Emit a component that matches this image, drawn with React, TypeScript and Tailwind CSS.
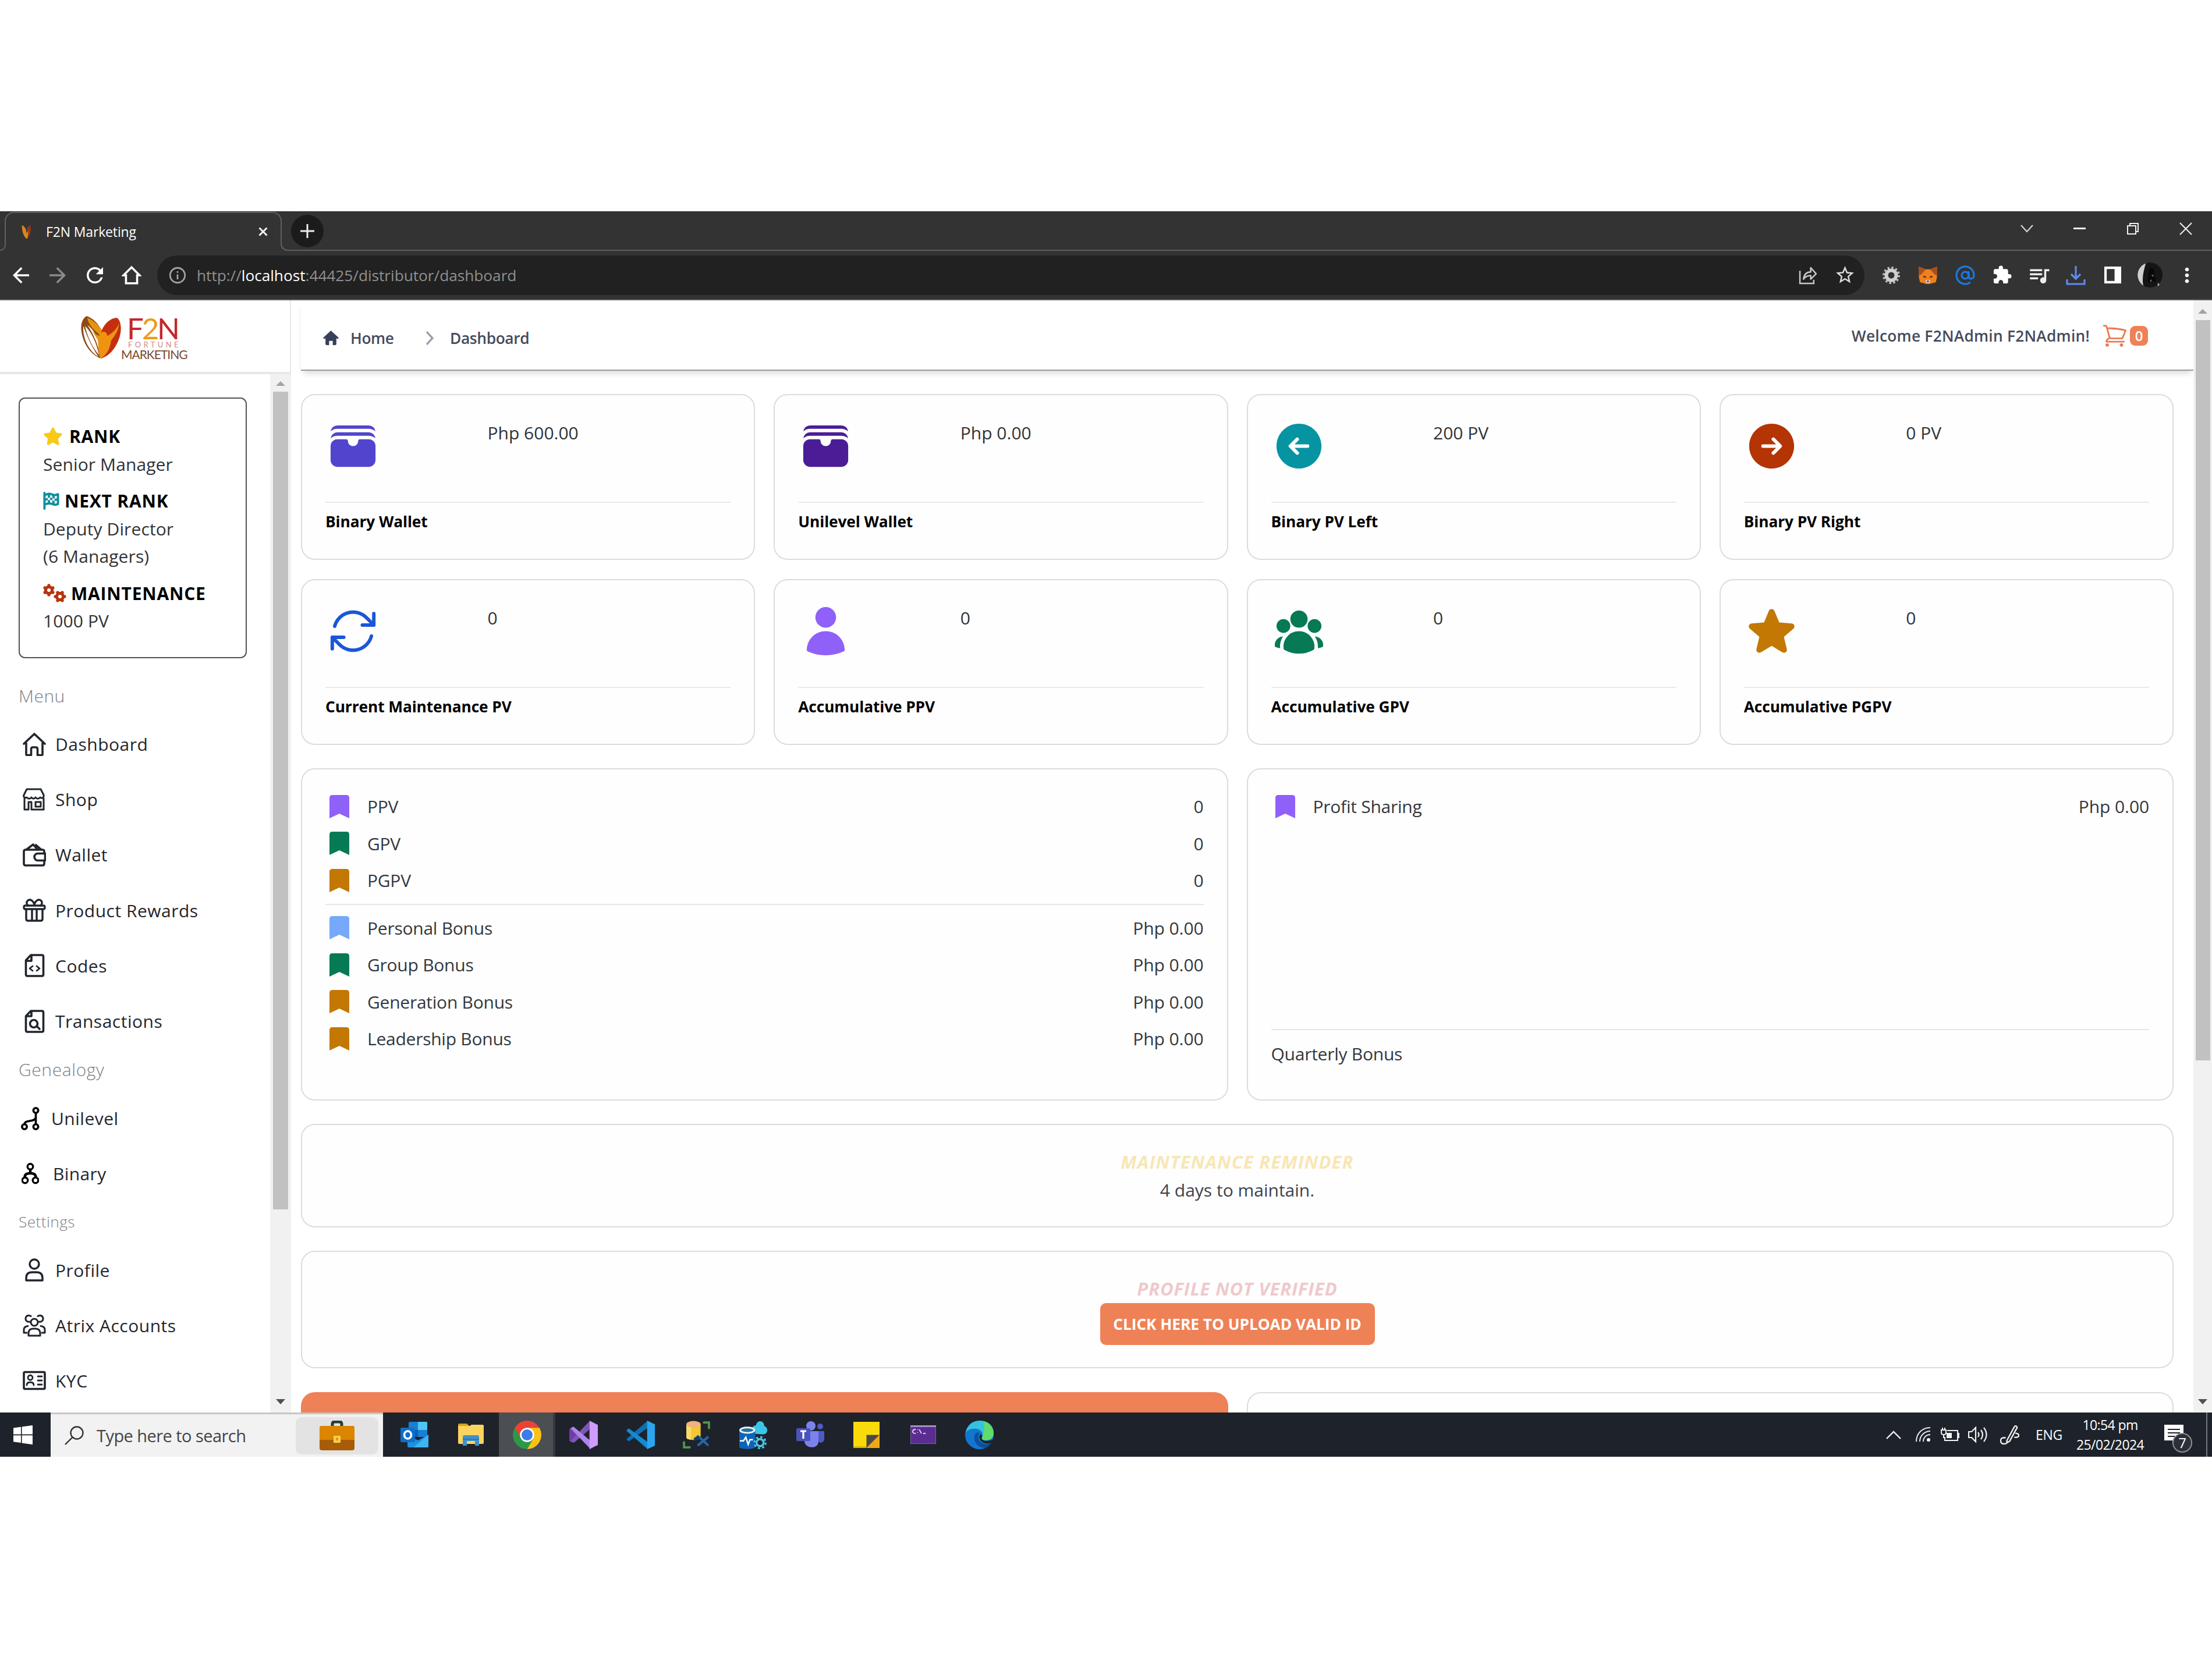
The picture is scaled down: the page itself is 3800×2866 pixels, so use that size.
import React from 'react';
import {
  HiWallet,
  HiArrowLeftCircle,
  HiArrowRightCircle,
  HiOutlineArrowPath,
  HiUser,
  HiUserGroup,
  HiStar,
  HiOutlineShoppingCart,
} from 'react-icons/hi2';
import { FaStar, FaFlagCheckered, FaGears } from 'react-icons/fa6';
import {
  MdArrowBack,
  MdArrowForward,
  MdRefresh,
  MdInfoOutline,
  MdStarBorder,
  MdExtension,
  MdQueueMusic,
  MdMoreVert,
} from 'react-icons/md';

/* ---------- browser chrome ---------- */

function TabStrip() {
  return (
    <div className="flex h-[68px] bg-[#333333] pt-px">
      <div className="h-[14px] w-[10px] self-end rounded-br-[12px] border-r-2 border-b-2 border-[#606060]" />
      <div className="-ml-[2px] flex h-[54px] w-[476px] items-center rounded-t-[16px] border-x-2 border-t-2 border-[#606060] pt-[11px] pl-[27px]">
        <svg viewBox="0 0 17 26" className="h-[26px] w-[17px]">
          <path d="M1 2C4 3 8 8 8 12v13C3 20 0 10 1 2z" fill="#d9861c" />
          <path d="M15 2c-3 1-6 5-6 9v14c6-4 8-15 6-23z" fill="#9e3416" />
          <path d="M6 12l3 3 3-3-2 13H8z" fill="#d9861c" />
        </svg>
        <span className="ml-[25px] text-[23px] leading-[28px] tracking-[-0.15px] text-white">F2N Marketing</span>
        <svg viewBox="0 0 16 16" className="ml-auto mr-[22px] h-[16px] w-[16px]" stroke="#f1f1f1" strokeWidth="3">
          <path d="M1.5 1.5l13 13M14.5 1.5l-13 13" />
        </svg>
      </div>
      <div className="-ml-[2px] h-[14px] w-[14px] self-end rounded-bl-[12px] border-b-2 border-l-2 border-[#606060]" />
      <div className="flex flex-1 items-start border-b-2 border-[#606060]">
        <div className="mt-[5px] ml-[4px] flex h-[56px] w-[56px] items-center justify-center rounded-full bg-[#1b1b1b]">
          <svg viewBox="0 0 24 24" className="h-[24px] w-[24px]" stroke="#ececec" strokeWidth="3">
            <path d="M12 0v24M0 12h24" />
          </svg>
        </div>
        <div className="ml-auto flex h-[57px] items-center">
          <div className="flex w-[91px] justify-center">
            <svg viewBox="0 0 22 14" className="h-[14px] w-[22px]" fill="none" stroke="#dedede" strokeWidth="2">
              <path d="M1 1l10 11L21 1" />
            </svg>
          </div>
          <div className="flex w-[91px] justify-center">
            <div className="h-[2.5px] w-[21px] bg-[#f1f1f1]" />
          </div>
          <div className="flex w-[91px] justify-center">
            <svg viewBox="0 0 22 22" className="h-[22px] w-[22px]" fill="none" stroke="#f1f1f1" strokeWidth="2">
              <path d="M2 6h14v14H2zM6 6V2h14v14h-4" />
            </svg>
          </div>
          <div className="flex w-[91px] justify-center">
            <svg viewBox="0 0 22 22" className="h-[22px] w-[22px]" stroke="#f1f1f1" strokeWidth="2">
              <path d="M1 1l20 20M21 1L1 21" />
            </svg>
          </div>
        </div>
      </div>
    </div>
  );
}

function Cell({ children }: { children: React.ReactNode }) {
  return <div className="flex w-[63.5px] shrink-0 items-center justify-center">{children}</div>;
}

function Toolbar() {
  return (
    <div className="flex h-[85px] items-center border-b-2 border-[#5b5b5b] bg-[#333333] pl-[4px]">
      <Cell><MdArrowBack className="size-[42px] text-white" /></Cell>
      <Cell><MdArrowForward className="size-[42px] text-[#8b8b8b]" /></Cell>
      <Cell><MdRefresh className="size-[42px] text-white" /></Cell>
      <Cell>
        <svg viewBox="0 0 32 32" className="size-[34px]" fill="none" stroke="#fff" strokeWidth="3.4">
          <path d="M3 16L16 3l13 13h-4v13H7V16z" />
        </svg>
      </Cell>
      <div className="ml-[12px] flex h-[68px] w-[2933px] items-center rounded-full bg-[#212121] pr-[2px] pl-[18px]">
        <MdInfoOutline className="size-[34px] text-[#a0a0a0]" />
        <span className="ml-[16px] text-[26.3px] leading-[40px] tracking-[-0.05px] text-[#8f8f8f]">
          http://<span className="text-white">localhost</span>:44425/distributor/dashboard
        </span>
        <div className="ml-auto flex">
          <Cell>
            <svg viewBox="0 0 31 31" className="size-[32px]" fill="none" stroke="#c8c8c8" strokeWidth="2.4">
              <path d="M2 8v21h23v-6" />
              <path d="M8 22c1-8 5-12 12-12V3l9 10-9 9v-6c-5 0-9 1-12 6z" strokeLinejoin="round" />
            </svg>
          </Cell>
          <Cell><MdStarBorder className="size-[37px] text-[#dcdcdc]" /></Cell>
        </div>
      </div>
      <div className="ml-[14px] flex">
        <Cell>
          <svg viewBox="0 0 32 32" className="size-[32px]" fill="none">
            <circle cx="16" cy="16" r="13" stroke="#bdbdbd" strokeWidth="4" strokeDasharray="3.4 3.4" />
            <circle cx="16" cy="16" r="8.5" stroke="#cfcfcf" strokeWidth="6" />
          </svg>
        </Cell>
        <Cell>
          <svg viewBox="0 0 34 32" className="h-[31px] w-[34px]">
            <path d="M1 1l12 5h8l12-5v19l-2 9-8 2-3 1h-6l-3-1-8-2-2-9z" fill="#f07f1e" />
            <path d="M1 1l12 5-8 9-4 2zM33 1L21 6l8 9 4 2z" fill="#a5501d" />
            <path d="M9 17l5 2 0 2-5-1zM25 17l-5 2 0 2 5-1z" fill="#4a3222" />
            <path d="M13 25h8l-1 5h-6z" fill="#e6ddd4" />
            <path d="M15 26h4l-1 3h-2z" fill="#3a3a3a" />
          </svg>
        </Cell>
        <Cell>
          <svg viewBox="0 0 34 34" className="size-[34px]" fill="none" stroke="#1b79e6" strokeWidth="3.2">
            <circle cx="17" cy="17" r="6" />
            <path d="M23 10v9c0 3 2 4 4 4 3 0 5-3 5-6A15 15 0 1 0 26 29" />
          </svg>
        </Cell>
        <Cell><MdExtension className="size-[35px] text-white" /></Cell>
        <Cell><MdQueueMusic className="size-[42px] text-[#ededed]" /></Cell>
        <Cell>
          <svg viewBox="0 0 34 34" className="size-[34px]" fill="none" stroke="#5b8def" strokeWidth="3.2">
            <path d="M17 1v22M9 15l8 8 8-8M2 24v8h30v-8" />
          </svg>
        </Cell>
        <Cell>
          <svg viewBox="0 0 28 28" className="size-[29px]">
            <path d="M0 0h28v28H0zM4 4v20h13V4z" fill="#fff" fillRule="evenodd" />
          </svg>
        </Cell>
        <Cell>
          <svg viewBox="0 0 42 42" className="size-[43px]">
            <circle cx="21" cy="21" r="21" fill="#151515" />
            <path d="M14 1.500A21 21 0 0 0 10 39C7 28 10 14 14 1.500z" fill="#cfcfcf" />
            <path d="M20 10c5-3 9 2 8 8l3 14h-14z" fill="#080808" />
            <path d="M24 21l3 2M22 29l1 3" stroke="#777" strokeWidth="2" />
            <path d="M34 34l3 3-3 3z" fill="#bbb" />
          </svg>
        </Cell>
        <Cell><MdMoreVert className="size-[40px] text-white" /></Cell>
      </div>
    </div>
  );
}

/* ---------- scrollbars ---------- */

function ArrowUp() {
  return (
    <svg viewBox="0 0 16 8" className="h-[8px] w-[16px] shrink-0">
      <path d="M0 8l8-8 8 8z" fill="#a3a3a3" />
    </svg>
  );
}

function ArrowDown() {
  return (
    <svg viewBox="0 0 16 9" className="mt-auto mb-[14px] h-[9px] w-[16px] shrink-0">
      <path d="M0 0l8 9 8-9z" fill="#505050" />
    </svg>
  );
}

/* ---------- sidebar ---------- */

function Logo() {
  return (
    <div className="flex h-[127px] items-start border-r-2 border-b-4 border-[#e7e7e7] pt-[26px] pl-[138px]">
      <svg viewBox="0 0 70 75" className="h-[75px] w-[70px] shrink-0">
        <path d="M11 1C3 5 0 16 2 28c3 20 14 38 33 46 4-14 6-32 3-46C31 14 22 5 11 1z" fill="#8a4b14" />
        <path d="M5 18C4 40 14 60 31 71 20 54 12 38 5 18z" fill="#fff" />
        <path d="M8 18c4 18 12 36 24 50C28 48 20 30 8 18z" fill="#fff" />
        <path d="M12 16c8 12 16 28 20 44l1-10C30 36 22 24 12 16z" fill="#fff" />
        <path d="M12 4c2 12 10 20 20 28l4 10 2-14C32 16 22 8 12 4z" fill="#e8930f" />
        <path d="M37 25C42 13 53 4 63 4c8 6 9 24 2 40-6 14-15 25-29 30-4-16-4-34 1-49z" fill="#c4300f" />
        <path d="M34 74c-3-12-3-24-4-32L20 26c6 6 10 9 14 9 0-4 2-7 6-7s6 3 6 7C54 32 62 24 67 13c-2 14-8 22-14 30-2 14-8 26-19 31z" fill="#ef9410" />
      </svg>
      <div className="flex w-[116px] flex-col pt-[3px]">
        <div className="flex h-[38px] items-center pl-[10px] font-['Lato'] text-[51px] leading-[38px] tracking-[-3.2px] text-[#c4282d]">
          F<span className="text-[#f09a1a]">2</span>N
        </div>
        <div className="mt-[4px] h-[10px] pl-[12px] font-['Lato'] text-[13px] leading-[10px] tracking-[4.4px] text-[#d08a86]">
          FORTUNE
        </div>
        <div className="mt-[4px] h-[16px] font-['Lato'] text-[21px] leading-[16px] tracking-[-1px] text-[#7c4a30]">
          MARKETING
        </div>
      </div>
    </div>
  );
}

function RankBox() {
  const heading = "text-[30px] leading-[47.5px] font-bold text-black tracking-[0.8px]";
  const line = "text-[30px] leading-[47.5px] tracking-[0.1px] text-[#2f3336]";
  return (
    <div className="mt-[40px] h-[448px] w-[392px] rounded-[11px] border-2 border-[#50525a] pt-[41px] pl-[40px]">
      <div className="flex items-center">
        <FaStar className="h-[31px] w-[34px] text-[#f8ca17]" />
        <span className={heading + " ml-[11px]"}>RANK</span>
      </div>
      <div className={line}>Senior Manager</div>
      <div className="mt-[16px] flex items-center">
        <FaFlagCheckered className="h-[31px] w-[28px] text-[#0e8f9c]" />
        <span className={heading + " ml-[9px]"}>NEXT RANK</span>
      </div>
      <div className={line}>Deputy Director</div>
      <div className={line}>(6 Managers)</div>
      <div className="mt-[16px] flex items-center">
        <FaGears className="h-[32px] w-[40px] text-[#b5350f]" />
        <span className={heading + " ml-[8px]"}>MAINTENANCE</span>
      </div>
      <div className={line}>1000 PV</div>
    </div>
  );
}

function Glyph({ name }: { name: string }) {
  const common = {
    viewBox: '0 0 40 40',
    className: 'size-[40px]',
    fill: 'none',
    stroke: '#20242c',
    strokeWidth: 3.6,
    strokeLinecap: 'round' as const,
    strokeLinejoin: 'round' as const,
  };
  switch (name) {
    case 'home':
      return (
        <svg {...common}>
          <path d="M2 19L20 2l18 17M6 17v20q0 1.500 1.500 1.500h7V28q0-3 3-3h5q3 0 3 3v10.500h7q1.500 0 1.500-1.500V17" />
        </svg>
      );
    case 'shop':
      return (
        <svg {...common} strokeWidth={3}>
          <path d="M7 2h24l5 10c1 4-3 7-6 4-2 3-6 3-8 0-2 3-5 3-7 0-2 3-6 3-8 0-4 2-6-1-5-4zM3 18v19h7V24h5v13h21V18" />
          <path d="M22 24h9v8h-9z" />
        </svg>
      );
    case 'wallet':
      return (
        <svg {...common}>
          <path d="M37 17v-3q0-3-3-3H5q-3 0-3 3v21q0 3 3 3h29q3 0 3-3v-3M6 11l12-9 8 9M23 3l9 8" />
          <path d="M38.500 17.500H26a4 4 0 0 0 0 12h12.500z" />
        </svg>
      );
    case 'gift':
      return (
        <svg {...common} strokeWidth={3.4}>
          <path d="M4 12h32q2 0 2 3t-2 3H4q-2 0-2-3t2-3zM6 18v17q0 3 3 3h22q3 0 3-3V18M16 18v20M24 18v20" />
          <path d="M20 10C18 3 13 1 10 2.500 6 4.500 6 9 9 12M20 10c2-7 7-9 10-7.500C34 4.500 34 9 31 12" />
        </svg>
      );
    case 'code':
      return (
        <svg {...common}>
          <path d="M14 2h19q2.500 0 2.500 2.500v31q0 2.500-2.500 2.500H8q-2.500 0-2.500-2.500V11zM15 3v9H6" />
          <path d="M17 21l-5 4 5 4M24 21l5 4-5 4" strokeWidth="2.8" />
        </svg>
      );
    case 'search':
      return (
        <svg {...common}>
          <path d="M14 2h19q2.500 0 2.500 2.500v31q0 2.500-2.500 2.500H8q-2.500 0-2.500-2.500V11zM15 3v8H6" />
          <circle cx="19" cy="24" r="6.500" />
          <path d="M24 28l5 5" />
        </svg>
      );
    case 'profile':
      return (
        <svg {...common} strokeWidth={3.4}>
          <circle cx="20" cy="10" r="8" />
          <path d="M6 38v-4q0-10 10-10h8q10 0 10 10v4z" />
        </svg>
      );
    case 'users':
      return (
        <svg {...common} strokeWidth={3}>
          <circle cx="20" cy="15" r="6" />
          <path d="M10 38v-4q0-8 8-8h4q8 0 8 8v4z" />
          <path d="M12 14a5.500 5.500 0 1 1 2-9.500M28 14a5.500 5.500 0 1 0-2-9.500M7 33H2v-5q0-6 7-6.500M33 33h5v-5q0-6-7-6.500" />
        </svg>
      );
    default:
      return (
        <svg {...common}>
          <path d="M4 5.500h32q2 0 2 2v25q0 2-2 2H4q-2 0-2-2v-25q0-2 2-2z" />
          <g strokeWidth="2.8">
            <circle cx="13" cy="15" r="4" />
            <path d="M7 28q0-5 6-5t6 5M26 13h7M26 20h7M26 27h7" />
          </g>
        </svg>
      );
  }
}

function NavItem({ icon, label }: { icon: string; label: string }) {
  return (
    <div className="flex h-[95.1px] items-center pl-[39px]">
      <Glyph name={icon} />
      <span className="ml-[16px] text-[30px] leading-[47.5px] tracking-[0.5px] text-[#23262b]">{label}</span>
    </div>
  );
}

function Sidebar() {
  return (
    <aside className="flex w-[500px] shrink-0 flex-col bg-white">
      <Logo />
      <div className="flex min-h-0 flex-1">
        <nav className="flex w-[464px] flex-col">
          <div className="ml-[32px]">
            <RankBox />
          </div>
          <div className="mt-[41px] mb-[12px] h-[47.5px] pl-[32px] text-[30px] leading-[47.5px] font-light tracking-[0.5px] text-[#7d8084]">Menu</div>
          <NavItem icon="home" label="Dashboard" />
          <NavItem icon="shop" label="Shop" />
          <NavItem icon="wallet" label="Wallet" />
          <NavItem icon="gift" label="Product Rewards" />
          <NavItem icon="code" label="Codes" />
          <NavItem icon="search" label="Transactions" />
          <div className="mt-[12px] mb-[12.5px] h-[47.5px] pl-[32px] text-[30px] leading-[47.5px] font-light tracking-[0.6px] text-[#7d8084]">Genealogy</div>
          <div className="flex h-[95.1px] items-center pl-[36px]">
            <svg viewBox="0 0 32 40" className="h-[40px] w-[32px]" fill="none" stroke="#000" strokeWidth="3.6">
              <circle cx="25.500" cy="6" r="4.200" />
              <circle cx="6" cy="34" r="4.200" />
              <circle cx="25.500" cy="34" r="4.200" />
              <path d="M25.500 10v20M6 30c0-9 18-3 19.500-12" />
            </svg>
            <span className="ml-[20px] text-[30px] leading-[47.5px] tracking-[0.5px] text-[#23262b]">Unilevel</span>
          </div>
          <div className="flex h-[95.1px] items-center pl-[37px]">
            <svg viewBox="0 0 30 37" className="h-[37px] w-[30px]" fill="none" stroke="#000" strokeWidth="3.4">
              <circle cx="15" cy="6.500" r="4.800" />
              <circle cx="6" cy="30" r="4.800" />
              <circle cx="24" cy="30" r="4.800" />
              <path d="M15 11v7M5.500 25c0-6 4-7 9.500-7s9.500 1 9.500 7" strokeWidth="4.5" />
            </svg>
            <span className="ml-[24px] text-[30px] leading-[47.5px] tracking-[0.4px] text-[#23262b]">Binary</span>
          </div>
          <div className="mt-[14.5px] mb-[16px] h-[40px] pl-[32px] text-[26.3px] leading-[40px] font-light tracking-[0.4px] text-[#7d8084]">Settings</div>
          <NavItem icon="profile" label="Profile" />
          <NavItem icon="users" label="Atrix Accounts" />
          <NavItem icon="card" label="KYC" />
        </nav>
        <div className="flex w-[36px] flex-col items-center bg-[#f1f1f1] pt-[12px]">
          <ArrowUp />
          <div className="mt-[10px] h-[1405px] w-[26px] bg-[#c1c1c1]" />
          <ArrowDown />
        </div>
      </div>
    </aside>
  );
}

/* ---------- dashboard ---------- */

function TopBar() {
  return (
    <header className="ml-[17px] flex h-[121px] shrink-0 border-b-2 border-[#9b9b9b] bg-white pl-[38px] shadow-[0_8px_10px_-4px_rgba(0,0,0,0.16)]">
      <div className="flex h-[129px] items-center text-[26.3px] leading-[40px] font-semibold tracking-[-0.35px] text-[#454b5c]">
        <svg viewBox="0 0 26 24" className="h-[25px] w-[27px]" fill="#38405a">
          <path d="M13 0l13 12-2 2-2-1.500V22q0 2-2 2h-4v-7h-6v7H6q-2 0-2-2v-9.500L2 14l-2-2z" />
        </svg>
        <span className="ml-[20px] w-[75px]">Home</span>
        <svg viewBox="0 0 14 24" className="ml-[54px] h-[24px] w-[14px]" fill="none" stroke="#9aa0ab" strokeWidth="3.4">
          <path d="M2 1l10 11L2 23" />
        </svg>
        <span className="ml-[28px]">Dashboard</span>
      </div>
      <div className="ml-auto flex h-[121px] items-center pr-[78px]">
        <span className="text-[26.3px] leading-[40px] font-semibold tracking-[0.25px] whitespace-nowrap text-[#454b5c]">
          Welcome F2NAdmin F2NAdmin!
        </span>
        <HiOutlineShoppingCart className="ml-[20px] size-[46px] text-[#ea7a55]" />
        <span className="ml-[3px] flex h-[34px] w-[31px] items-center justify-center rounded-[9px] bg-[#ef8157] text-[24px] leading-[30px] font-semibold text-white">
          0
        </span>
      </div>
    </header>
  );
}

function StatCard({ icon, value, title }: { icon: React.ReactNode; value: string; title: string }) {
  return (
    <div className="h-[285px] rounded-[24px] border-2 border-[#dcdcdc] bg-[#fefefe] px-[40px] pt-[40px]">
      <div className="flex h-[145px] border-b-2 border-[#e9e9e9]">
        <div className="w-[40%]">{icon}</div>
        <div className="pt-px text-[30px] leading-[47.5px] text-[#2f3336]">{value}</div>
      </div>
      <div className="mt-[12px] text-[26.3px] leading-[40px] font-bold tracking-[-0.1px] text-black">{title}</div>
    </div>
  );
}

function BonusRow({ color, label, value }: { color: string; label: string; value: string }) {
  return (
    <div className="flex h-[47.5px] items-center text-[30px] leading-[47.5px] text-[#33373c]">
      <svg viewBox="0 0 34 40" className="ml-[7px] h-[40px] w-[34px]" fill={color}>
        <path d="M5 0h24q5 0 5 5v35l-17-8-17 8V5q0-5 5-5z" />
      </svg>
      <span className="ml-[31px] tracking-[-0.25px]">{label}</span>
      <span className="ml-auto tracking-[-0.1px]">{value}</span>
    </div>
  );
}

function Dashboard() {
  const size = 'size-[95px]';
  const panel = 'rounded-[24px] border-2 border-[#dcdcdc] bg-[#fefefe]';
  return (
    <main className="flex min-w-0 flex-1 flex-col overflow-hidden bg-white">
      <TopBar />
      <div className="flex flex-col pt-[40px] pr-[34px] pl-[17px]">
        <div className="grid grid-cols-4 gap-x-[32px] gap-y-[33px]">
          <StatCard icon={<HiWallet className={size + ' text-[#5145cd]'} />} value="Php 600.00" title="Binary Wallet" />
          <StatCard icon={<HiWallet className={size + ' text-[#4a1d96]'} />} value="Php 0.00" title="Unilevel Wallet" />
          <StatCard icon={<HiArrowLeftCircle className={size + ' text-[#0694a2]'} />} value="200 PV" title="Binary PV Left" />
          <StatCard icon={<HiArrowRightCircle className={size + ' text-[#b43403]'} />} value="0 PV" title="Binary PV Right" />
          <StatCard icon={<HiOutlineArrowPath className={size + ' text-[#1a56db]'} />} value="0" title="Current Maintenance PV" />
          <StatCard icon={<HiUser className={size + ' text-[#9061f9]'} />} value="0" title="Accumulative PPV" />
          <StatCard icon={<HiUserGroup className={size + ' text-[#057a55]'} />} value="0" title="Accumulative GPV" />
          <StatCard icon={<HiStar className={size + ' text-[#c27803]'} />} value="0" title="Accumulative PGPV" />
        </div>
        <div className="mt-[40px] grid grid-cols-2 gap-x-[32px]">
          <div className={panel + ' flex h-[571px] flex-col gap-[16px] px-[40px] pt-[40px]'}>
            <BonusRow color="#9061f9" label="PPV" value="0" />
            <BonusRow color="#057a55" label="GPV" value="0" />
            <BonusRow color="#c27803" label="PGPV" value="0" />
            <div className="h-[2px] bg-[#e6e6e6]" />
            <BonusRow color="#76a9fa" label="Personal Bonus" value="Php 0.00" />
            <BonusRow color="#057a55" label="Group Bonus" value="Php 0.00" />
            <BonusRow color="#c27803" label="Generation Bonus" value="Php 0.00" />
            <BonusRow color="#c27803" label="Leadership Bonus" value="Php 0.00" />
          </div>
          <div className={panel + ' flex h-[571px] flex-col px-[40px] pt-[40px]'}>
            <BonusRow color="#9061f9" label="Profit Sharing" value="Php 0.00" />
            <div className="mt-[358px] h-[2px] bg-[#e6e6e6]" />
            <div className="mt-[17px] text-[30px] leading-[47.5px] tracking-[-0.25px] text-[#33373c]">Quarterly Bonus</div>
          </div>
        </div>
        <div className={panel + ' mt-[40px] h-[178px] pt-[40px] text-center text-[30px] leading-[47.5px]'}>
          <div className="text-[31px] font-bold tracking-[1.2px] text-[#f8e6b4] italic">MAINTENANCE REMINDER</div>
          <div className="text-[#3c424d]">4 days to maintain.</div>
        </div>
        <div className={panel + ' mt-[40px] flex h-[202px] flex-col items-center pt-[40px]'}>
          <div className="text-[31px] leading-[47.5px] font-bold tracking-[0.9px] text-[#efc9cc] italic">PROFILE NOT VERIFIED</div>
          <div className="flex h-[72px] w-[472px] items-center justify-center rounded-[10px] bg-[#ef8157] text-[26.3px] leading-[40px] font-bold tracking-[-0.05px] whitespace-nowrap text-white">
            CLICK HERE TO UPLOAD VALID ID
          </div>
        </div>
        <div className="mt-[41px] grid grid-cols-2 gap-x-[32px]">
          <div className="h-[100px] rounded-[24px] bg-[#ef8157]" />
          <div className={panel + ' h-[100px]'} />
        </div>
      </div>
    </main>
  );
}

/* ---------- taskbar ---------- */

function AppCell({ children, active }: { children: React.ReactNode; active?: boolean }) {
  return (
    <div className={'flex h-full w-[97.15px] items-center justify-center ' + (active ? 'border-r-[4px] border-[#35393f] bg-[#4b4e53] pl-[4px]' : '')}>
      {children}
    </div>
  );
}

const APP = 'size-[49px]';

function Taskbar() {
  return (
    <footer className="flex h-[76px] items-stretch bg-[#1e232b]">
      <div className="flex w-[87px] items-center pl-[23px]">
        <svg viewBox="0 0 33 33" className="size-[33px]" fill="#fff">
          <path d="M0 4.500L13 2.700V15.600H0zM14.600 2.400L33 0v15.600H14.600zM0 17.200h13v12.900L0 28.300zM14.600 17.200H33V33l-18.400-2.600z" />
        </svg>
      </div>
      <div className="flex w-[571px] items-center border-t-[3px] border-[#c6c6c6] bg-[#f2f2f2] pl-[24px]">
        <svg viewBox="0 0 33 33" className="size-[33px]" fill="none" stroke="#333" strokeWidth="2.4">
          <circle cx="21" cy="12" r="10.500" />
          <path d="M13.500 19.500L1 32" />
        </svg>
        <span className="ml-[22px] text-[29px] leading-[40px] tracking-[-0.55px] text-[#444]">Type here to search</span>
        <div className="ml-auto mr-[8px] flex h-[64px] w-[142px] items-center justify-center rounded-[10px] bg-[#e3e3e3]">
          <svg viewBox="0 0 60 52" className="h-[52px] w-[60px]">
            <path d="M22 10V6q0-4 4-4h8q4 0 4 4v4" fill="none" stroke="#2c3b3a" strokeWidth="5" />
            <rect x="0" y="9" width="60" height="42" rx="4" fill="#a85c08" />
            <path d="M4 9h52q4 0 4 4v20H0V13q0-4 4-4z" fill="#db8500" />
            <rect x="24" y="26" width="12" height="12" rx="1" fill="#ffd04a" />
            <rect x="28" y="29" width="4" height="5" fill="#d99a1c" />
          </svg>
        </div>
      </div>
      <div className="ml-[5px] flex">
        <AppCell>
          <svg viewBox="0 0 48 44" className="h-[44px] w-[48px]">
            <path d="M14 2q0-2 2-2h28q2 0 2 2v24H14z" fill="#1a7fd4" />
            <path d="M30 0h14q2 0 2 2v12H30z" fill="#50c7f2" />
            <path d="M14 14h16v12H14z" fill="#0a5fae" />
            <path d="M12 22l18 10 18-10v20q0 2-2 2H14q-2 0-2-2z" fill="#1f8fe0" />
            <path d="M48 22L22 44h24q2 0 2-2z" fill="#3db3ef" />
            <rect x="0" y="10" width="25" height="25" rx="2" fill="#0f6fc8" />
            <ellipse cx="12.500" cy="22.500" rx="6" ry="6.500" fill="none" stroke="#fff" strokeWidth="3.600" />
          </svg>
        </AppCell>
        <AppCell>
          <svg viewBox="0 0 44 38" className="h-[38px] w-[44px]">
            <path d="M0 2q0-2 2-2h13l4 4h-19z" fill="#d9a01c" />
            <path d="M0 4h20l3-2h19q2 0 2 2v29q0 2-2 2H2q-2 0-2-2z" fill="#fbd45d" />
            <path d="M8 38V23q0-3 3-3h22q3 0 3 3v15h-7v-8H15v8z" fill="#3f91cd" />
            <path d="M8 27h28" stroke="#2f78b0" strokeWidth="2" />
          </svg>
        </AppCell>
        <AppCell active>
          <svg viewBox="0 0 48 48" className={APP}>
            <path d="M24 24L3.200 12A24 24 0 0 1 44.800 12z" fill="#ea4335" />
            <path d="M24 48A24 24 0 0 0 44.800 12H24l10.400 18z" fill="#fbc116" />
            <path d="M24 12H8L3.200 12l10.400 18z" fill="#ea4335" />
            <path d="M3.200 12L13.600 30 24 36 34 30 24 48A24 24 0 0 1 3.200 12z" fill="#2a9a48" />
            <circle cx="24" cy="24" r="12" fill="#fff" />
            <circle cx="24" cy="24" r="9.300" fill="#3a7cec" />
          </svg>
        </AppCell>
        <AppCell>
          <svg viewBox="0 0 48 48" className={APP}>
            <path d="M0 14l5-3 8 6v14l-8 6-5-3z" fill="#6b3fa3" />
            <path d="M3 35l-1-1L34 1v14L8 37z" fill="#7f55b8" />
            <path d="M2 13l5-3 29 24v14z" fill="#b083ea" />
            <path d="M34 0l14 7v34l-14 7z" fill="#cf9bff" />
          </svg>
        </AppCell>
        <AppCell>
          <svg viewBox="0 0 48 48" className={APP}>
            <path d="M0 31l4 4L36 12V0z" fill="#0e6fb4" />
            <path d="M0 17l4-4 32 23v12z" fill="#1389d3" />
            <path d="M35 0l13 6v36l-13 6z" fill="#2aa5f0" />
          </svg>
        </AppCell>
        <AppCell>
          <svg viewBox="0 0 48 48" className={APP}>
            <path d="M6 6v22c0 6 24 6 24 0V6z" fill="#f5c731" />
            <path d="M6 6v22c0 3 4 4 8 4V6z" fill="#fbdc6a" />
            <ellipse cx="18" cy="6" rx="12" ry="5.500" fill="#f2b27c" />
            <path d="M34 3h10v11M2 35v10h11" fill="none" stroke="#4f9a4b" strokeWidth="3.600" />
            <path d="M25 42l18-15M27 27l16 15" stroke="#2468a8" strokeWidth="4" />
            <path d="M18 30l8-6 3 6-9 4z" fill="#123f70" />
          </svg>
        </AppCell>
        <AppCell>
          <svg viewBox="0 0 48 48" className={APP}>
            <path d="M24 22c-6-10 0-14 4-14C30-2 42-1 42 9c7 2 7 14-2 14z" fill="#3cc5e8" />
            <path d="M0 16v28c0 5 27 5 27 0V16z" fill="#0b64b8" />
            <ellipse cx="13.500" cy="16" rx="12" ry="4.500" fill="#2c6f9a" stroke="#dff4fb" strokeWidth="3" />
            <path d="M1 34h6l4-6 4 12 3-8h5" fill="none" stroke="#fff" strokeWidth="2.400" />
            <circle cx="35" cy="37" r="9" fill="#1e232b" />
            <circle cx="35" cy="37" r="6" fill="none" stroke="#4dc4e6" strokeWidth="3.500" />
            <circle cx="35" cy="37" r="9.500" fill="none" stroke="#4dc4e6" strokeWidth="3" strokeDasharray="3.730 3.730" />
          </svg>
        </AppCell>
        <AppCell>
          <svg viewBox="0 0 48 46" className="h-[46px] w-[48px]">
            <circle cx="25" cy="8" r="8" fill="#7b83eb" />
            <circle cx="41" cy="9" r="5" fill="#5059c9" />
            <path d="M36 17h12v13c0 9-12 9-12 0z" fill="#5059c9" />
            <path d="M14 17h24v18c0 13-22 13-24 0z" fill="#7b83eb" />
            <rect x="0" y="12" width="24" height="22" rx="2" fill="#4b53bc" />
            <path d="M7 17h10M12 17v13" stroke="#fff" strokeWidth="3.200" />
          </svg>
        </AppCell>
        <AppCell>
          <svg viewBox="0 0 44 44" className="size-[45px]">
            <path d="M0 0h44v24L24 44H0z" fill="#fadb0a" />
            <path d="M0 41h24v3H0z" fill="#d9b70a" />
            <path d="M22 44V22h22z" fill="#4b4a46" />
            <path d="M22 44l22-22v22z" fill="#eda912" />
          </svg>
        </AppCell>
        <AppCell>
          <svg viewBox="0 0 44 32" className="h-[32px] w-[44px]">
            <rect width="44" height="32" fill="#5c2d91" stroke="#8d6cb3" strokeWidth="1.500" />
            <rect width="44" height="3" fill="#a78fc4" />
            <path d="M9 7q-5 0-5 3.500T9 14M12 7v1M12 12v1M15 7l4 7M22 14h4" stroke="#ded3ea" strokeWidth="1.800" fill="none" />
          </svg>
        </AppCell>
        <AppCell>
          <svg viewBox="0 0 48 48" className={APP}>
            <circle cx="24" cy="24" r="24" fill="#1276cf" />
            <path d="M1 20C4 6 14 0 25 0c14 0 23 9 23 21 0 8-6 12-13 12-5 0-8-2-7-4 3-5 2-12-7-15C12 12 4 15 1 20z" fill="#36c2dc" />
            <path d="M30 1c11 2 18 10 18 20 0 8-6 12-13 12-5 0-8-2-7-4 4-8 6-18 2-28z" fill="#5fdc6b" />
            <path d="M16 24c-3 12 6 22 18 22A22 22 0 0 0 44 37c-8 5-22 2-22-10 0-4 2-6 4-6-4-2-9 0-10 3z" fill="#0c4f9e" />
            <path d="M27 23c2 2 2 4 1 6-1 3 3 5 8 5 5 0 9-1 12-4l1 6-4 1c-9 4-21 0-21-10 0-3 1-4 3-4z" fill="#1e232b" />
          </svg>
        </AppCell>
      </div>
      <div className="ml-auto flex items-center text-white">
        <svg viewBox="0 0 26 15" className="h-[15px] w-[26px]" fill="none" stroke="#f1f1f1" strokeWidth="2.4">
          <path d="M1 14L13 2l12 12" />
        </svg>
        <svg viewBox="0 0 26 26" className="ml-[25px] size-[26px]" fill="none" stroke="#e6e6e6" strokeWidth="2">
          <path d="M1 25C1 11 11 1 25 1M7 25C7 15 15 7 25 7M13 25c0-7 5-12 12-12" />
          <circle cx="22" cy="22" r="3" fill="#fff" stroke="none" />
        </svg>
        <svg viewBox="0 0 33 24" className="ml-[16px] h-[24px] w-[33px]" fill="none" stroke="#f1f1f1" strokeWidth="2">
          <path d="M8 16v6h22V5H12M30 10h2v7h-2M2 4h8v5q0 3-4 3t-4-3zM4 4V0M8 4V0M6 12v6" />
          <path d="M11 9h9v9h-9z" fill="#f1f1f1" stroke="none" />
        </svg>
        <svg viewBox="0 0 34 30" className="ml-[15px] h-[30px] w-[34px]" fill="none" stroke="#f1f1f1" strokeWidth="2.200">
          <path d="M1 10h5l7-7v24l-7-7H1zM17 11q3 4 0 8M22 7q6 8 0 16M27 3q9 12 0 24" />
        </svg>
        <svg viewBox="0 0 34 34" className="ml-[21px] size-[33px]" fill="none" stroke="#f1f1f1" strokeWidth="2.400">
          <path d="M12 27L25 3q2-3 4-1t0 4L17 28l-5 3zM10 22q-9-1-9 5t6 6q4 0 6-4M27 14q6 0 6 4t-8 3" />
        </svg>
        <span className="ml-[28px] w-[46px] text-[23px] leading-[28px] tracking-[-0.3px]">ENG</span>
        <div className="ml-[16px] flex w-[132px] flex-col items-center text-[23px] leading-[34.500px] tracking-[-0.6px]">
          <span>10:54 pm</span>
          <span>25/02/2024</span>
        </div>
        <div className="relative ml-[27px] h-[34px] w-[72px]">
          <svg viewBox="0 0 50 50" className="size-[50px]" fill="none">
            <path d="M0 0h33v27H19l-5 7v-7H0z" fill="#fff" />
            <path d="M6 8h21M6 14h21M6 20h12" stroke="#1e232b" strokeWidth="2.200" />
          </svg>
          <span className="absolute top-[14px] left-[14px] flex size-[34px] items-center justify-center rounded-full border-2 border-[#8d9095] bg-[#2b3037] text-[24px] leading-[22px]">7</span>
        </div>
        <div className="mr-[8px] h-full w-[2px] bg-[#747981]" />
      </div>
    </footer>
  );
}

export default function App() {
  return (
    <div className="h-[2866px] w-[3800px] overflow-hidden bg-white pt-[363px] font-['Open_Sans','Noto_Sans',sans-serif]">
      <div className="flex h-[2140px] flex-col">
        <TabStrip />
        <Toolbar />
        <div className="flex h-[1911px] overflow-hidden">
          <Sidebar />
          <Dashboard />
          <div className="flex w-[32px] shrink-0 flex-col items-center bg-[#f1f1f1] pt-[15px]">
            <ArrowUp />
            <div className="mt-[11px] h-[1272px] w-[25px] shrink-0 bg-[#c1c1c1]" />
            <ArrowDown />
          </div>
        </div>
        <Taskbar />
      </div>
    </div>
  );
}
